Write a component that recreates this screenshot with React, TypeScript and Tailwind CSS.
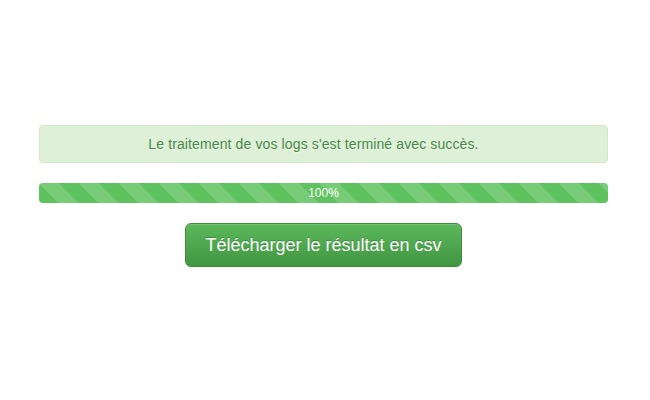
export default function App() {
  return (
    <div className="w-[650px] h-[400px] bg-white" style={{ fontFamily: '"Liberation Sans", Arial, sans-serif' }}>
      <div className="pt-[125px] pl-[39px] w-[608px] flex flex-col">
        <div className="h-[38px] rounded-[4px] border border-[#d6e9c6] bg-[#dff0d8] text-[#468847] text-[14px] tracking-[0.12px] [text-shadow:0_1px_0_rgba(255,255,255,0.5)] flex items-center justify-center pr-[20px]">
          Le traitement de vos logs s'est terminé avec succès.
        </div>
        <div className="mt-[20px] h-[20px] rounded-[4px] bg-[#f5f5f5] overflow-hidden">
          <div
            className="h-full w-full bg-[#5ec25e] text-white text-[12px] leading-[20px] text-center"
            style={{
              backgroundImage:
                'linear-gradient(45deg, rgba(255,255,255,.16) 25%, transparent 25%, transparent 50%, rgba(255,255,255,.16) 50%, rgba(255,255,255,.16) 75%, transparent 75%, transparent)',
              backgroundSize: '40px 40px',
            }}
          >
            100%
          </div>
        </div>
        <div className="mt-[20px] flex justify-center">
          <button className="w-[277px] h-[44px] rounded-[6px] border border-[#3e8f3e] bg-gradient-to-b from-[#5cb85c] to-[#419641] text-white text-[18px] [text-shadow:0_-1px_0_rgba(0,0,0,0.2)] shadow-[inset_0_1px_0_rgba(255,255,255,0.15),0_1px_1px_rgba(0,0,0,0.075)]">
            Télécharger le résultat en csv
          </button>
        </div>
      </div>
    </div>
  );
}
